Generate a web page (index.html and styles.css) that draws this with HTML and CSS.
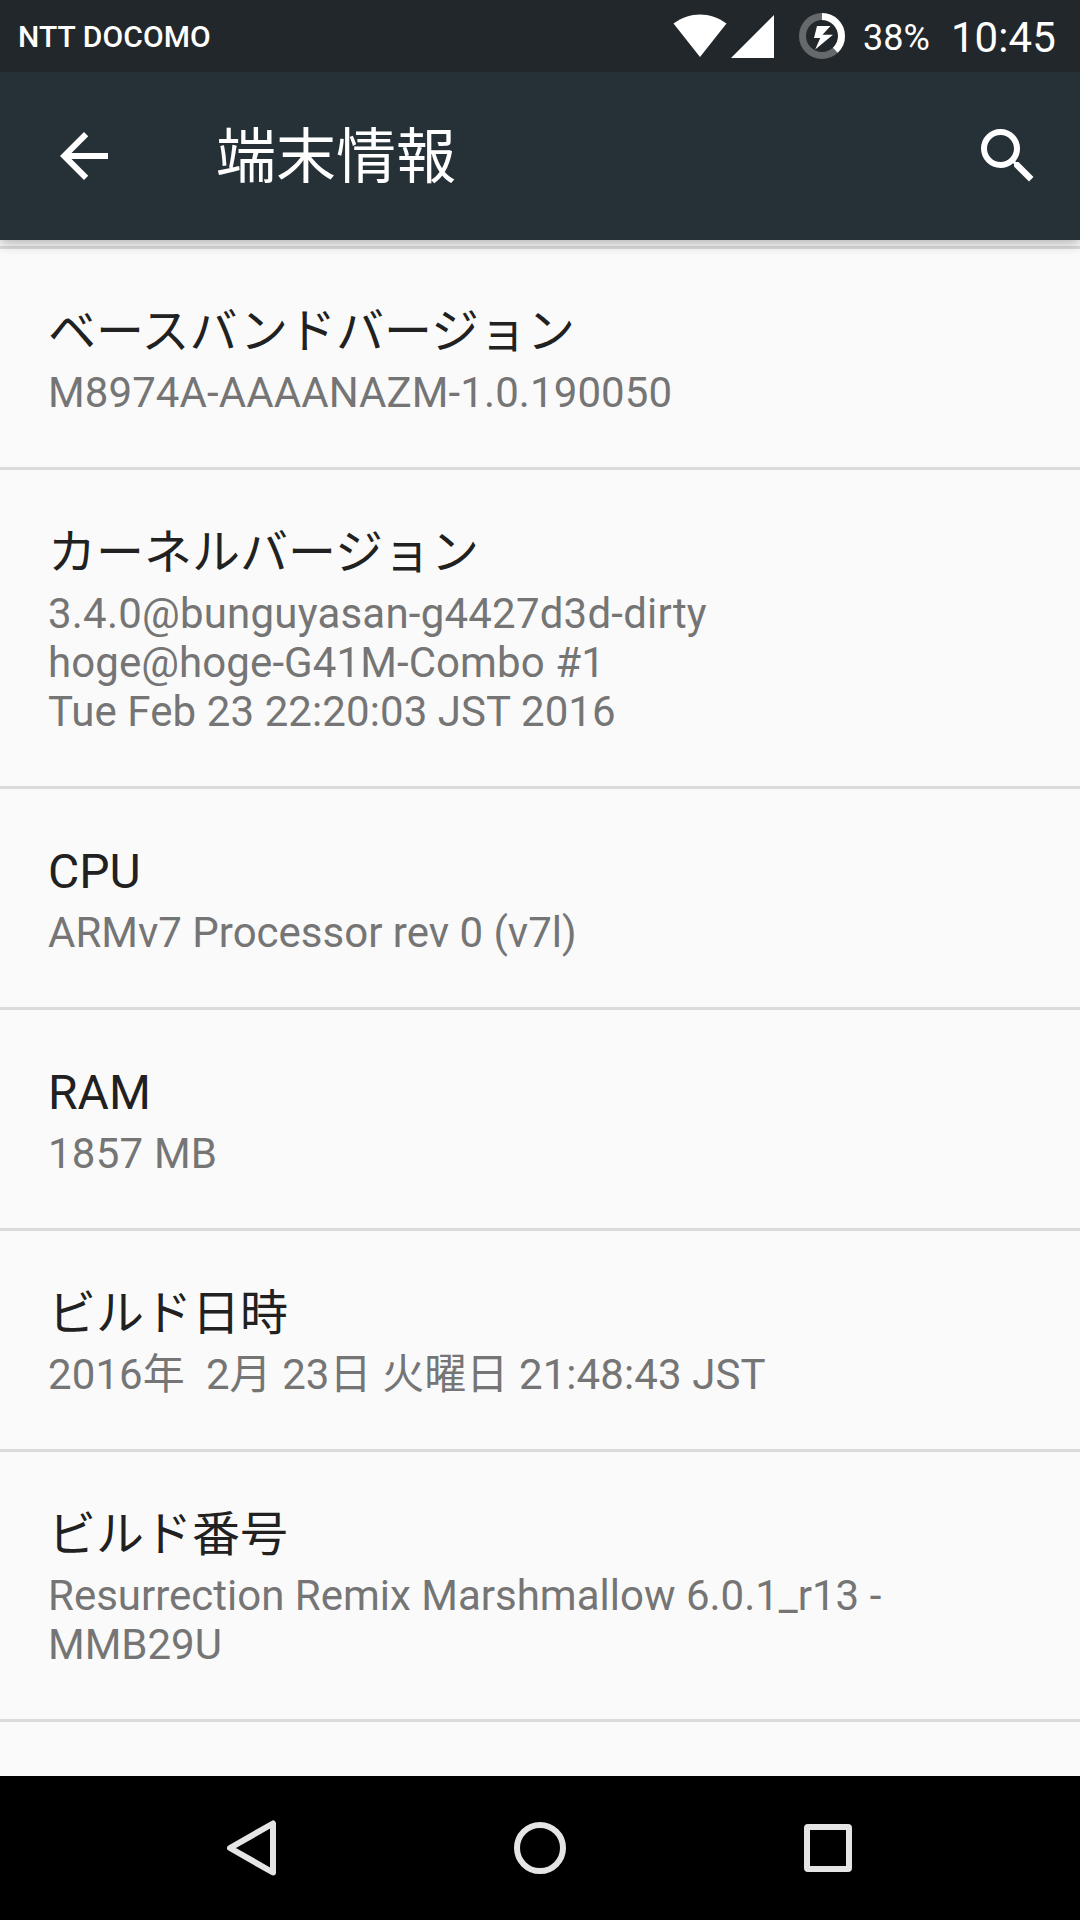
FILE: index.html
```html
<!DOCTYPE html>
<html lang="ja">
<head>
    <meta charset="utf-8" />
    <meta name="viewport" content="width=device-width, initial-scale=1">
    <title>端末情報</title>
    <link rel="stylesheet" href="styles.css">
</head>
<body>
    <div class="status">
        <span class="carrier">NTT DOCOMO</span>
        <svg class="wifi" width="54" height="44" viewBox="0 0 54 44"><path d="M0.5 9.5C17-2.6 37-2.6 53.5 9.5L27 43z" fill="#fff"/></svg>
        <svg class="signal" width="43" height="43" viewBox="0 0 43 43"><path d="M43 0v43H0z" fill="#fff"/></svg>
        <svg class="battery" width="46" height="46" viewBox="0 0 46 46">
            <circle cx="23" cy="23" r="19.5" fill="none" stroke="#66696c" stroke-width="7"/>
            <circle cx="23" cy="23" r="19.5" fill="none" stroke="#fff" stroke-width="7" pathLength="100" stroke-dasharray="38 62" transform="rotate(-90 23 23)"/>
            <path d="M18 13h13.500l-8 8.700h10.500L16.200 36.500l5-11.500H15z" fill="#fff"/>
        </svg>
        <span class="percent">38%</span>
        <span class="clock">10:45</span>
    </div>
    <header>
        <svg class="icon" viewBox="0 0 24 24"><path d="M20 11H7.830l5.590-5.590L12 4l-8 8 8 8 1.410-1.410L7.830 13H20v-2z"/></svg>
        <h1>端末情報</h1>
        <svg class="icon" viewBox="0 0 24 24"><path d="M15.500 14h-.790l-.280-.270A6.470 6.470 0 0 0 16 9.500 6.500 6.500 0 1 0 9.500 16c1.610 0 3.090-.590 4.230-1.570l.270.280v.790l5 4.990L20.490 19l-4.990-5zm-6 0C7.010 14 5 11.990 5 9.500S7.010 5 9.500 5 14 7.010 14 9.500 11.990 14 9.500 14z"/></svg>
    </header>
    <main>
        <div class="item">
            <h2>ベースバンドバージョン</h2>
            <p class="wide">M8974A-AAAANAZM-1.0.190050</p>
        </div>
        <div class="item">
            <h2>カーネルバージョン</h2>
            <p class="wide"><span class="wider">3.4.0@bunguyasan-g4427d3d-dirty</span><br />hoge@hoge-G41M-Combo #1<br />Tue Feb 23 22:20:03 JST 2016</p>
        </div>
        <div class="item">
            <h2>CPU</h2>
            <p>ARMv7 Processor rev 0 (v7l)</p>
        </div>
        <div class="item">
            <h2>RAM</h2>
            <p class="wider">1857 MB</p>
        </div>
        <div class="item">
            <h2>ビルド日時</h2>
            <p class="wide">2016年&nbsp; 2月 23日 火曜日 21:48:43 JST</p>
        </div>
        <div class="item">
            <h2>ビルド番号</h2>
            <p>Resurrection Remix Marshmallow 6.0.1_r13 -<br />MMB29U</p>
        </div>
    </main>
    <nav>
        <svg width="60" height="60" viewBox="0 0 60 60"><path d="M51 5.500v49L8 30z"/></svg>
        <svg width="60" height="60" viewBox="0 0 60 60"><circle cx="30" cy="30" r="23"/></svg>
        <svg width="60" height="60" viewBox="0 0 60 60"><rect x="9" y="9" width="42" height="42" rx="1"/></svg>
    </nav>
</body>
</html>
```
FILE: styles.css
```css
* {padding: 0;margin: 0;box-sizing: border-box;}
body {
    display: flex;
    flex-direction: column;
    height: 1920px;
    overflow: hidden;
    background: #fafafa;
    font-family: Roboto, "Noto Sans CJK JP", sans-serif;
}
h1, h2 {font-weight: normal;}

.status {position: relative;z-index: 2;display: flex;align-items: center;height: 72px;padding: 0 24px 0 18px;background: #22272b;color: #fff;}
.carrier {flex: 1;font-size: 30px;font-weight: 500;letter-spacing: .1px;}
.wifi {margin-right: 4px;}
.signal {margin-right: 25px;}
.battery {margin-right: 18px;}
.percent {font-size: 36px;margin-right: 21px;padding-top: 3px;}
.clock {font-size: 42px;padding-top: 3px;letter-spacing: .1px;}

header {
    position: relative;
    display: flex;
    align-items: center;
    height: 168px;
    padding: 0 36px 0 48px;
    background: #263137;
    color: #fff;
    box-shadow: 0 3px 12px rgba(0, 0, 0, .3);
}
h1 {flex: 1;margin-left: 96px;padding-top: 4px;font-size: 60px;line-height: 72px;}
.icon {width: 72px;height: 72px;fill: #fff;}

main {flex: 1;padding-top: 6px;overflow: hidden;}
.item {padding: 55px 48px 50px;border-top: 3px solid #dbdbdb;}
.item:last-child {border-bottom: 3px solid #dbdbdb;}
.item h2 {color: #212121;font-size: 48px;line-height: 56px;}
.item p {margin-top: 8px;color: #757575;font-size: 42px;line-height: 49px;white-space: nowrap;}
.item .wide {letter-spacing: .09px;}
.item .wider {letter-spacing: .21px;}

nav {display: flex;justify-content: center;height: 144px;background: #000;}
nav svg {margin: 42px 114px;fill: none;stroke: #e5e5e5;stroke-width: 6;stroke-linejoin: round;}
```
